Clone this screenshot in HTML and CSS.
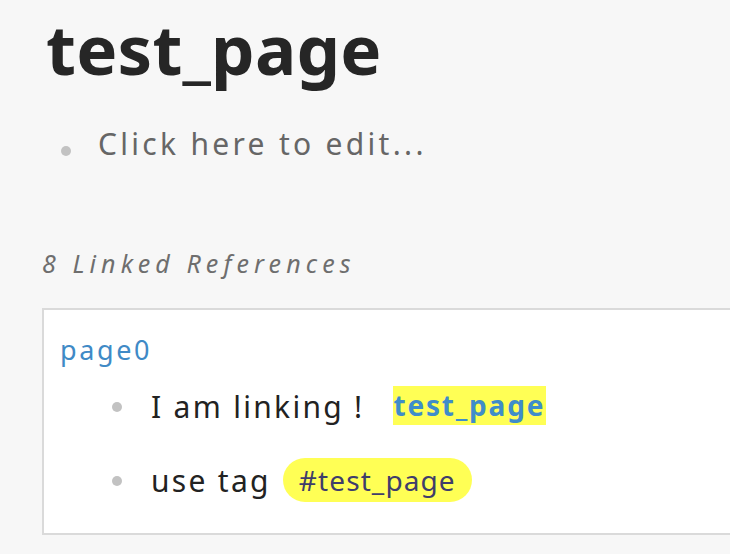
FILE: index.html
```html
<!DOCTYPE html>
<html>
<head>
<meta charset="utf-8">
<link rel="stylesheet" href="styles.css">
</head>
<body>
<div class="page">
  <h1 class="title">test_page</h1>
  <div class="block top-block">
    <span class="bullet"></span>
    <span class="placeholder">Click here to edit...</span>
  </div>
  <div class="refs-header">8 Linked References</div>
  <div class="ref-card">
    <div class="ref-page">page0</div>
    <div class="block nested">
      <span class="bullet"></span>
      <span class="text">I am linking !</span>
      <a class="page-ref">test_page</a>
    </div>
    <div class="block nested">
      <span class="bullet"></span>
      <span class="text">use tag</span>
      <a class="tag">#test_page</a>
    </div>
  </div>
</div>
</body>
</html>
```
FILE: styles.css
```css
html, body {
  margin: 0;
  padding: 0;
  background: #f7f7f7;
  overflow: hidden;
}
body {
  font-family: "Noto Sans", "DejaVu Sans", sans-serif;
  color: #222222;
}
.page {
  padding: 0 0 0 42px;
}
.title {
  margin: 0;
  padding: 8px 0 0 4px;
  font-size: 69px;
  line-height: 80px;
  font-weight: 700;
  color: #262626;
  letter-spacing: 0.2px;
}
.block {
  display: flex;
  align-items: center;
}
.top-block {
  margin-top: 36px;
  padding-left: 19px;
}
.bullet {
  width: 10px;
  height: 10px;
  border-radius: 50%;
  background: #c2c2c2;
  flex: none;
}
.top-block .bullet {
  margin-top: 14px;
  margin-right: 27px;
}
.placeholder {
  font-size: 30px;
  line-height: 40px;
  color: #666666;
  letter-spacing: 3.3px;
}
.refs-header {
  margin-top: 81px;
  font-size: 25px;
  line-height: 36px;
  font-style: italic;
  color: #6e6e6e;
  letter-spacing: 5.1px;
}
.ref-card {
  margin-top: 27px;
  margin-right: -60px;
  background: #ffffff;
  border: 2px solid #dadada;
  padding: 20px 16px 15px 16px;
}
.ref-page {
  font-size: 27px;
  line-height: 40px;
  color: #3f8ac6;
  letter-spacing: 2.6px;
}
.nested {
  padding-left: 52px;
  height: 74px;
}
.nested:first-of-type {
  margin-top: -2px;
}
.nested .bullet {
  margin-right: 29px;
}
.text {
  font-size: 30px;
  line-height: 40px;
  letter-spacing: 2.3px;
  color: #222222;
}
.page-ref {
  margin-left: 28px;
  margin-bottom: 4px;
  background: #ffff55;
  color: #3f8dc9;
  font-weight: 700;
  font-size: 28px;
  line-height: 39px;
  padding: 0 1px;
  letter-spacing: 1.8px;
}
.tag {
  margin-left: 12px;
  background: #ffff55;
  color: #3f3d6b;
  font-size: 28px;
  line-height: 44px;
  padding: 0 16px 0 16px;
  border-radius: 22px;
  letter-spacing: 1.1px;
  margin-bottom: 2px;
}
```
